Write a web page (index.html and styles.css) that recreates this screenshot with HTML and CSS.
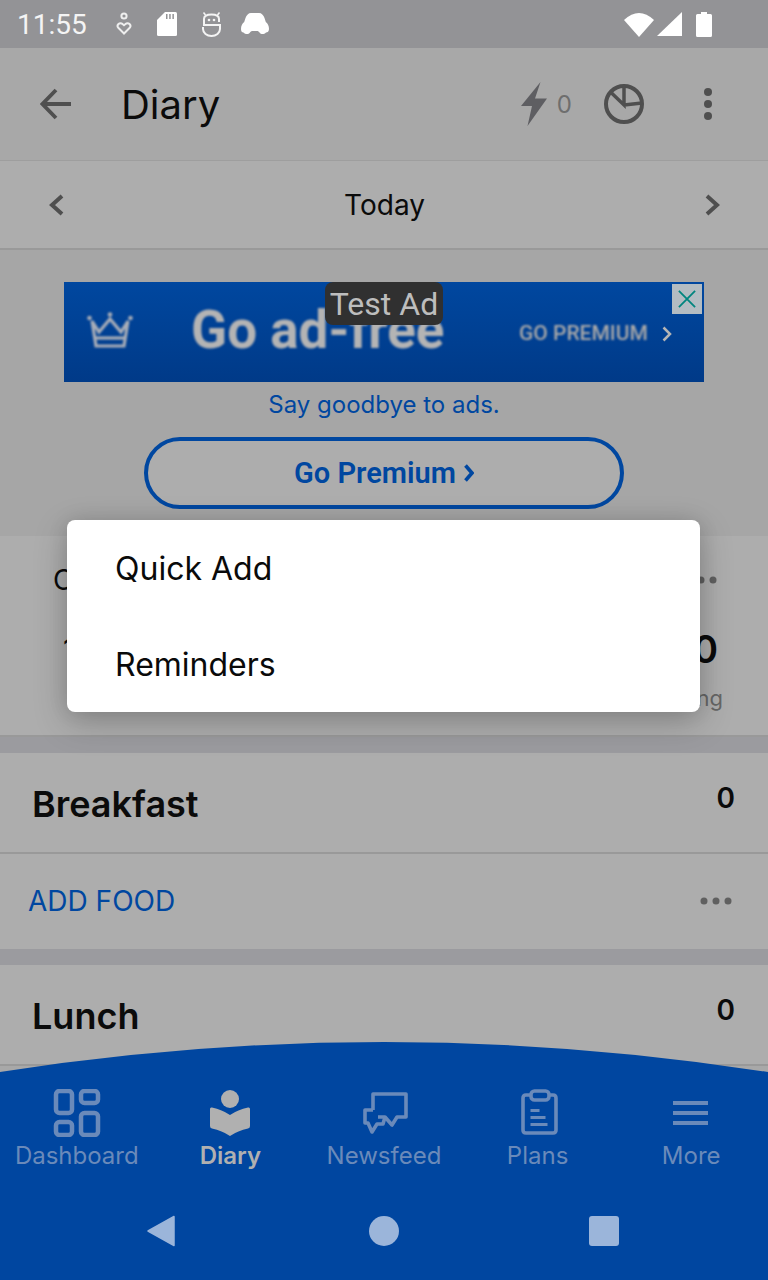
FILE: index.html
```html
<!DOCTYPE html>
<html lang="en">
<head>
<meta charset="utf-8">
<title>Diary</title>
<link rel="stylesheet" href="styles.css">
</head>
<body>
<div class="screen">
  <div class="status">
    <span class="time">11:55</span>
    <svg class="st st-heart" viewBox="0 0 16 24"><circle cx="8" cy="4" r="2.600" fill="none" stroke="#eee" stroke-width="2"/><path d="M8 21.500 2.500 16a2.800 2.800 0 0 1 4-4L8 13.200 9.500 12a2.800 2.800 0 0 1 4 4Z" fill="none" stroke="#eee" stroke-width="2"/></svg>
    <svg class="st st-sd" viewBox="0 0 20 24"><path d="M8 0h10.500A1.500 1.500 0 0 1 20 1.500V22.500A1.500 1.500 0 0 1 18.500 24H1.500A1.500 1.500 0 0 1 0 22.500V8Z" fill="#fff"/><path d="M9 2h1.500v5H9zM12.200 2h1.500v5h-1.500zM15.400 2h1.500v5h-1.500z" fill="#939396"/></svg>
    <svg class="st st-robot" viewBox="0 0 19 25"><path d="M17 10V7Q17 2.500 9.500 2.500T2 7V13H18V17A8.500 7 0 0 1 1 17V15" fill="none" stroke="#f4f4f4" stroke-width="2"/><path d="M1.500 .5l2 2.500M17.500 .5l-2 2.500" stroke="#f4f4f4" stroke-width="1.600"/><circle cx="7" cy="8" r="1.300" fill="#f4f4f4"/><circle cx="12" cy="8" r="1.300" fill="#f4f4f4"/></svg>
    <svg class="st st-car" viewBox="0 0 28 22"><path d="M10 0h8c2.500 0 4.500 2 5.500 5l1.300 4c2 1.500 3.200 4 3.200 7 0 2.500-1.500 3.500-3 3.500-2 2-5 2-6.500 0-.7-1-1.500-1.500-2.500-1.500H11.500c-1 0-1.800.5-2.500 1.500-1.500 2-4.500 2-6.500 0-1.500 0-2.500-1-2.500-3.500 0-3 1.200-5.500 3.200-7l1.300-4C5.500 2 7.500 0 10 0Z" fill="#fff"/></svg>
    <span class="status-gap"></span>
    <svg class="st st-wifi" viewBox="0 0 30 25"><path d="M0 8Q15-6 30 8L15 25Z" fill="#fff"/></svg>
    <svg class="st st-signal" viewBox="0 0 25 24"><path d="M25 0V24H0Z" fill="#fff"/></svg>
    <svg class="st st-battery" viewBox="0 0 16 25"><path d="M5 0h6v2h3.500q1.500 0 1.500 1.500V23.500q0 1.500-1.500 1.500H1.500Q0 25 0 23.500V3.500Q0 2 1.500 2H5Z" fill="#fff"/></svg>
  </div>

  <header class="appbar">
    <svg class="ic-back" viewBox="0 0 32 32"><path d="M31 16H3M16 2 2.500 16 16 30" fill="none" stroke="#4f4f4f" stroke-width="3.800"/></svg>
    <h1 class="title">Diary</h1>
    <svg class="ic-bolt" viewBox="0 0 26 44"><path d="M19.500 0 14 16.500H26L6.500 44 11 24H0Z" fill="#5e5e62"/></svg>
    <span class="streak">0</span>
    <svg class="ic-pie" viewBox="0 0 40 40"><circle cx="20" cy="20" r="18" fill="none" stroke="#4f4f4f" stroke-width="4"/><path d="M20 2V21L6.500 8M20 21 38 19" fill="none" stroke="#4f4f4f" stroke-width="3.500"/></svg>
    <svg class="ic-kebab" viewBox="0 0 8 32"><circle cx="4" cy="4" r="4" fill="#4f4f4f"/><circle cx="4" cy="16" r="4" fill="#4f4f4f"/><circle cx="4" cy="28" r="4" fill="#4f4f4f"/></svg>
  </header>

  <div class="datebar">
    <svg class="ic-chev" viewBox="0 0 15 22"><path d="M13 2 3 11l10 9" fill="none" stroke="#4f4f4f" stroke-width="4"/></svg>
    <span class="today">Today</span>
    <svg class="ic-chev" viewBox="0 0 15 22"><path d="M2 2l10 9-10 9" fill="none" stroke="#4f4f4f" stroke-width="4"/></svg>
  </div>

  <section class="promo">
    <div class="banner">
      <svg class="crown" viewBox="0 0 46 36"><g fill="none" stroke="#a9aeb8" stroke-width="3.200"><path d="M5 9 12 20l11-13 11 13L41 9l-4 25H9Z"/><path d="M9 26h28"/></g><circle cx="2.500" cy="6" r="2.300" fill="#a9aeb8"/><circle cx="23" cy="2.500" r="2.300" fill="#a9aeb8"/><circle cx="43.500" cy="6" r="2.300" fill="#a9aeb8"/></svg>
      <span class="banner-head">Go ad-free</span>
      <span class="banner-cta">GO PREMIUM</span>
      <svg class="banner-chev" viewBox="0 0 10 16"><path d="M1.500 1.500 8 8l-6.500 6.500" fill="none" stroke="#b5b5b5" stroke-width="2.500"/></svg>
      <span class="test-ad">Test Ad</span>
      <span class="ad-close"><svg viewBox="0 0 20 20"><path d="M1 1l18 18M19 1 1 19" fill="none" stroke="#00857f" stroke-width="2"/></svg></span>
    </div>
    <p class="goodbye">Say goodbye to ads.</p>
    <div class="premium-btn">Go Premium <svg class="btn-chev" viewBox="0 0 10 18"><path d="M1.500 1.500 8 9l-6.500 7.500" fill="none" stroke="#0047a0" stroke-width="3.600"/></svg></div>
  </section>

  <section class="calories">
    <div class="cal-top"><span class="cal-title">Calories Remaining</span>
      <svg class="dots" viewBox="0 0 32 8"><circle cx="4" cy="4" r="3.500"/><circle cx="16" cy="4" r="3.500"/><circle cx="28" cy="4" r="3.500"/></svg></div>
    <div class="cal-row"><span class="cal-num">1,900</span><span class="cal-num cal-big">0</span></div>
    <div class="cal-sub">Remaining</div>
  </section>

  <div class="gap"></div>

  <section class="meal">
    <div class="meal-head"><span class="meal-name">Breakfast</span><span class="meal-cal">0</span></div>
    <div class="meal-add"><span class="add-food">ADD FOOD</span>
      <svg class="dots" viewBox="0 0 32 8"><circle cx="4" cy="4" r="3.500"/><circle cx="16" cy="4" r="3.500"/><circle cx="28" cy="4" r="3.500"/></svg></div>
  </section>

  <div class="gap"></div>

  <section class="meal">
    <div class="meal-head"><span class="meal-name">Lunch</span><span class="meal-cal">0</span></div>
  </section>

  <div class="menu">
    <div class="menu-item">Quick Add</div>
    <div class="menu-item">Reminders</div>
  </div>

  <nav class="bottom">
    <svg class="curve" viewBox="0 0 768 30" preserveAspectRatio="none"><path d="M0 30Q384-30 768 30Z" fill="#0046a0"/></svg>
    <div class="tabs">
      <div class="tab">
        <svg class="tab-ic" viewBox="0 0 48 48"><g fill="none" stroke="#6a8aba" stroke-width="4.500"><rect x="3" y="2" width="16" height="22" rx="3.500"/><rect x="28" y="2" width="17" height="12" rx="3.500"/><rect x="3" y="33" width="16" height="13" rx="3.500"/><rect x="28" y="24" width="17" height="22" rx="3.500"/></g></svg>
        <span>Dashboard</span>
      </div>
      <div class="tab tab-on">
        <svg class="tab-ic" viewBox="0 0 48 48"><circle cx="24" cy="10" r="9" fill="#b0b0b0"/><path d="M4 20q0-2 2-1.500 10 2 18 7.500 8-5.500 18-7.500 2-.5 2 1.500V37q0 2-2 2.500-10 2-18 7.500-8-5.500-18-7.500-2-.5-2-2.500Z" fill="#b0b0b0"/></svg>
        <span>Diary</span>
      </div>
      <div class="tab">
        <svg class="tab-ic" viewBox="0 0 48 48"><g fill="none" stroke="#6a8aba" stroke-width="3.600" stroke-linejoin="round"><path d="M13 21V5H46V28H37L32 36 25 28H18"/><path d="M13 21H5V34H8L12 43 17 35H23L25 28"/></g></svg>
        <span>Newsfeed</span>
      </div>
      <div class="tab">
        <svg class="tab-ic" viewBox="0 0 48 48"><g fill="none" stroke="#6a8aba" stroke-width="3.600"><path d="M17 6H12Q9 6 9 9V41Q9 44 12 44H39Q42 44 42 41V9Q42 6 39 6H35"/><rect x="17" y="2" width="18" height="9" rx="3.500"/></g><path d="M16.500 20h9v3h-9zM16.500 27h15v3h-15zM16.500 34h17v3h-17z" fill="#6a8aba"/></svg>
        <span>Plans</span>
      </div>
      <div class="tab">
        <svg class="tab-ic" viewBox="0 0 48 48"><path d="M6 12h35v4H6zM6 22h35v4H6zM6 32h35v4H6z" fill="#6a8aba"/></svg>
        <span>More</span>
      </div>
    </div>
    <div class="sysbar">
      <svg class="sys-back" viewBox="0 0 28 32"><path d="M27 1.500V30.500L1 16Z" fill="#9bb5da" stroke="#9bb5da" stroke-width="1.500" stroke-linejoin="round"/></svg>
      <span class="sys-home"></span>
      <span class="sys-recent"></span>
    </div>
  </nav>
</div>
</body>
</html>
```
FILE: styles.css
```css
* { box-sizing: border-box; }
html, body { margin: 0; padding: 0; }
body { background: #adadad; font-family: Inter, "Noto Sans", sans-serif; color: #0b0b0b; }
.screen { position: relative; width: 768px; height: 1280px; overflow: hidden; display: flex; flex-direction: column; background: #a8a8a8; }
svg { display: block; flex: none; }

.status { height: 48px; flex: none; background: #939396; display: flex; align-items: center; padding-left: 17px; }
.time { font: 400 28px/48px Roboto, sans-serif; color: #f4f4f4; width: 99px; margin-top: 2px; }
.st-heart { width: 16px; height: 24px; margin-right: 25px; }
.st-sd { width: 20px; height: 24px; margin-right: 25px; }
.st-robot { width: 19px; height: 25px; margin-right: 20px; }
.st-car { width: 28px; height: 22px; }
.status-gap { flex: 1; }
.st-wifi { width: 30px; height: 25px; margin-right: 3px; }
.st-signal { width: 25px; height: 24px; margin-right: 14px; }
.st-battery { width: 16px; height: 25px; margin-right: 56px; }

.appbar { height: 113px; flex: none; background: #a8a8a8; border-bottom: 1px solid #9e9e9e; display: flex; align-items: center; padding: 0 56px 0 40px; }
.ic-back { width: 32px; height: 32px; }
.title { margin: 2px 0 0 49px; flex: 1; font-size: 40px; font-weight: 400; line-height: 48px; }
.ic-bolt { width: 26px; height: 44px; }
.streak { font-size: 24px; color: #6e6e6e; margin: 0 32px 0 10px; }
.ic-pie { width: 40px; height: 40px; margin-right: 60px; }
.ic-kebab { width: 8px; height: 32px; }

.datebar { height: 89px; flex: none; background: #adadad; border-bottom: 2px solid #999; display: flex; align-items: center; justify-content: space-between; padding: 0 48px 0 49px; }
.ic-chev { width: 15px; height: 22px; }
.today { font-size: 28px; }

.promo { height: 286px; flex: none; background: #a6a6a6; display: flex; flex-direction: column; align-items: center; padding-top: 32px; }
.banner { position: relative; width: 640px; height: 100px; flex: none; background: linear-gradient(#00479f, #003a88); display: flex; align-items: center; padding-left: 23px; }
.crown { width: 46px; height: 36px; margin-top: -4px; filter: blur(.8px); }
.banner-head { font: 700 53px/1 Roboto, sans-serif; color: #b4b4b4; margin: -4px 0 0 58px; width: 328px; filter: blur(1px); white-space: nowrap; }
.banner-cta { font: 500 21px/1 Roboto, sans-serif; color: #a9a9a9; filter: blur(.8px); white-space: nowrap; margin-top: 2px; }
.banner-chev { width: 10px; height: 16px; margin: 4px 0 0 14px; filter: blur(.4px); }
.test-ad { position: absolute; left: 261px; top: 0; width: 118px; height: 43px; background: #303030; border-radius: 8px; color: #bdbdbd; font: 400 32px/45px Roboto, sans-serif; text-align: center; white-space: nowrap; }
.ad-close { position: absolute; right: 2px; top: 2px; width: 30px; height: 30px; background: #b3bcc2; padding: 6px; }
.ad-close svg { width: 18px; height: 18px; }
.goodbye { margin: 9px 0 0; font-size: 24px; line-height: 28px; color: #0047a0; }
.premium-btn { width: 480px; height: 72px; margin-top: 18px; flex: none; border: 4px solid #0047a0; border-radius: 36px; background: #adadad; color: #0047a0; font: 600 29px/1 Roboto, sans-serif; display: flex; align-items: center; justify-content: center; gap: 8px; }
.btn-chev { width: 10px; height: 18px; }

.calories { height: 201px; flex: none; background: #adadad; border-bottom: 2px solid #999; padding: 24px 45px 0 53px; }
.cal-top { display: flex; justify-content: space-between; align-items: center; height: 40px; }
.cal-title { font-size: 28px; }
.dots { width: 32px; height: 8px; fill: #606060; margin-right: 6px; }
.cal-row { display: flex; justify-content: space-between; align-items: center; }
.cal-num { font-size: 30px; margin-top: 26px; padding-left: 10px; }
.cal-big { font-size: 38px; font-weight: 600; padding: 0 5px 0 0; }
.cal-sub { color: #666; font-size: 22px; line-height: 28px; margin-top: 12px; text-align: right; }

.gap { height: 16px; flex: none; background: #9b9b9f; }

.meal { flex: none; background: #adadad; }
.meal-head { height: 101px; border-bottom: 2px solid #999; display: flex; justify-content: space-between; padding: 0 33px 0 32px; }
.meal-name { font-size: 36px; font-weight: 600; line-height: 40px; margin-top: 31px; }
.meal-cal { font-size: 28px; font-weight: 600; line-height: 32px; margin-top: 29px; }
.meal-add { height: 94px; display: flex; align-items: center; justify-content: space-between; padding: 0 36px 0 28px; margin-bottom: 1px; }
.add-food { font-size: 28px; color: #0047a0; }
.meal-add .dots { margin-right: 0; }

.menu { position: absolute; left: 67px; top: 520px; width: 633px; height: 192px; background: #fff; border-radius: 8px; box-shadow: 0 10px 34px rgba(0,0,0,.22), 0 0 20px rgba(0,0,0,.1); }
.menu-item { height: 96px; padding-left: 48px; font-size: 32px; line-height: 98px; color: #0a0a0a; }

.bottom { position: absolute; left: 0; right: 0; bottom: 0; height: 238px; background: linear-gradient(transparent 30px, #0046a0 30px); padding-top: 47px; }
.curve { position: absolute; left: 0; top: 0; width: 768px; height: 30px; }
.tabs { position: relative; display: grid; grid-template-columns: repeat(5, 1fr); }
.tab { display: flex; flex-direction: column; align-items: center; color: #6a8aba; font-size: 24px; line-height: 30px; }
.tab span { margin-top: 4px; }
.tab-ic { width: 48px; height: 48px; }
.tab-on { color: #b0b0b0; font-weight: 600; }
.sysbar { display: flex; align-items: center; height: 34px; margin-top: 43px; position: relative; }
.sys-back { width: 28px; height: 32px; margin-left: 147px; }
.sys-home { width: 30px; height: 30px; border-radius: 50%; background: #9bb5da; margin-left: 194px; }
.sys-recent { width: 30px; height: 30px; border-radius: 3px; background: #9bb5da; margin-left: 190px; }
```
